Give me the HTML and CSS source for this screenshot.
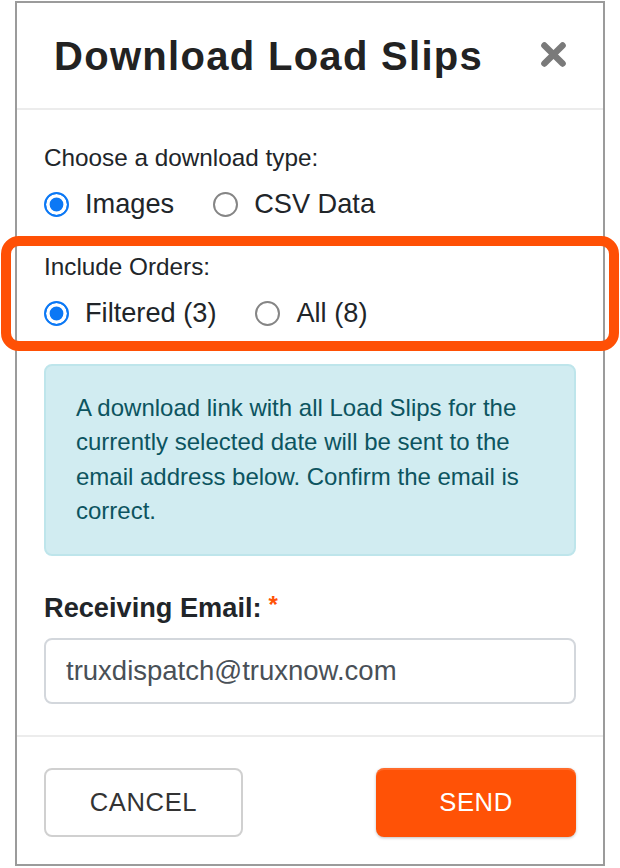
FILE: index.html
```html
<!DOCTYPE html>
<html lang="en">
<head>
<meta charset="utf-8">
<title>Download Load Slips</title>
<link rel="stylesheet" href="styles.css">
</head>
<body>
<div class="frame">
  <header class="modal-header">
    <h1 class="title">Download Load Slips</h1>
    <button class="close" aria-label="Close">
      <svg width="25" height="25" viewBox="0 0 25 25" aria-hidden="true">
        <path d="M3.4 3.4 L21.6 21.6 M21.6 3.4 L3.4 21.6" stroke="#7a7a7a" stroke-width="6.4" stroke-linecap="round" fill="none"/>
      </svg>
    </button>
  </header>

  <div class="modal-body">
    <div class="group">
      <div class="group-label">Choose a download type:</div>
      <div class="options">
        <label class="option"><span class="radio checked"></span><span class="option-text">Images</span></label>
        <label class="option"><span class="radio"></span><span class="option-text">CSV Data</span></label>
      </div>
    </div>

    <div class="group group-orders">
      <div class="group-label">Include Orders:</div>
      <div class="options">
        <label class="option"><span class="radio checked"></span><span class="option-text">Filtered (3)</span></label>
        <label class="option"><span class="radio"></span><span class="option-text">All (8)</span></label>
      </div>
    </div>

    <div class="alert">A download link with all Load Slips for the currently selected date will be sent to the email address below. Confirm the email is correct.</div>

    <label class="field-label" for="email">Receiving Email:<span class="req">*</span></label>
    <input class="email" id="email" type="email" value="truxdispatch@truxnow.com">
  </div>

  <footer class="modal-footer">
    <button class="btn btn-cancel">CANCEL</button>
    <button class="btn btn-send">SEND</button>
  </footer>

  <div class="highlight" aria-hidden="true"></div>
</div>
</body>
</html>
```

FILE: styles.css
```css
* {
  box-sizing: border-box;
}

html, body {
  margin: 0;
  padding: 0;
  background: #ffffff;
}

body {
  font-family: "Liberation Sans", Arial, Helvetica, sans-serif;
  color: #212529;
}

.frame {
  position: relative;
  margin: 1px 0 0 15px;
  width: 590px;
  border: 2px solid #9b9b9b;
  background: #ffffff;
}

/* Header */
.modal-header {
  height: 107px;
  border-bottom: 2px solid #ececec;
  display: flex;
  align-items: center;
  justify-content: space-between;
  padding: 0 37px 0 37px;
}

.title {
  margin: 0;
  font-size: 40px;
  line-height: 40px;
  font-weight: 700;
  letter-spacing: 1.3px;
  color: #222222;
}

.close {
  display: flex;
  padding: 0;
  margin: -2px 0 0 0;
  border: 0;
  background: none;
  cursor: pointer;
}

/* Body */
.modal-body {
  padding: 31px 27px 31.4px 27px;
}

.group-orders {
  margin-top: 29px;
}

.group-label {
  font-size: 24.3px;
  line-height: 34px;
  color: #212529;
  margin-bottom: 12px;
}

.options {
  display: flex;
  align-items: center;
  gap: 39px;
  height: 34px;
}

.option {
  display: flex;
  align-items: center;
  gap: 16px;
}

.option-text {
  font-size: 27.2px;
  line-height: 34px;
  color: #212529;
}

.radio {
  width: 25px;
  height: 25px;
  border-radius: 50%;
  border: 2px solid #858585;
  background: #ffffff;
  flex: none;
}

.radio.checked {
  border: 2.5px solid #0b78f5;
  background: #0b78f5;
  box-shadow: inset 0 0 0 3.6px #ffffff;
}

.alert {
  margin-top: 34px;
  background: #d1ecf1;
  border: 2px solid #bee5eb;
  border-radius: 8px;
  padding: 25px 30px;
  color: #0c5460;
  font-size: 24px;
  line-height: 34.4px;
}

.field-label {
  display: block;
  margin-top: 35px;
  height: 34px;
  font-size: 27.2px;
  line-height: 34px;
  font-weight: 700;
  color: #212529;
}

.req {
  position: relative;
  top: -4px;
  margin-left: 7px;
  color: #ff5206;
  font-size: 24px;
}

.email {
  display: block;
  width: 100%;
  height: 66px;
  margin: 13px 0 0 0;
  padding: 0 20px;
  border: 2px solid #d3d7dc;
  border-radius: 8px;
  font-family: "Liberation Sans", Arial, Helvetica, sans-serif;
  font-size: 27.5px;
  color: #495057;
  background: #ffffff;
  outline: none;
}

/* Footer */
.modal-footer {
  border-top: 2px solid #ececec;
  display: flex;
  justify-content: space-between;
  align-items: center;
  padding: 31px 27px 27px 27px;
}

.btn {
  width: 200px;
  height: 69px;
  border-radius: 8px;
  font-family: "Liberation Sans", Arial, Helvetica, sans-serif;
  font-size: 25.6px;
  letter-spacing: 0.6px;
  cursor: pointer;
}

.btn-cancel {
  width: 199px;
  background: #ffffff;
  border: 2px solid #d0d0d0;
  color: #333333;
}

.btn-send {
  background: #ff5206;
  border: 0;
  color: #ffffff;
  box-shadow: inset 0 2px 0 rgba(255, 255, 255, 0.15), 0 1px 3px rgba(0, 0, 0, 0.25);
}

/* Annotation highlight drawn over the "Include Orders" group */
.highlight {
  position: absolute;
  left: -16px;
  top: 233px;
  width: 618px;
  height: 115px;
  border: 10px solid #ff5005;
  border-radius: 18px;
  pointer-events: none;
}
```
